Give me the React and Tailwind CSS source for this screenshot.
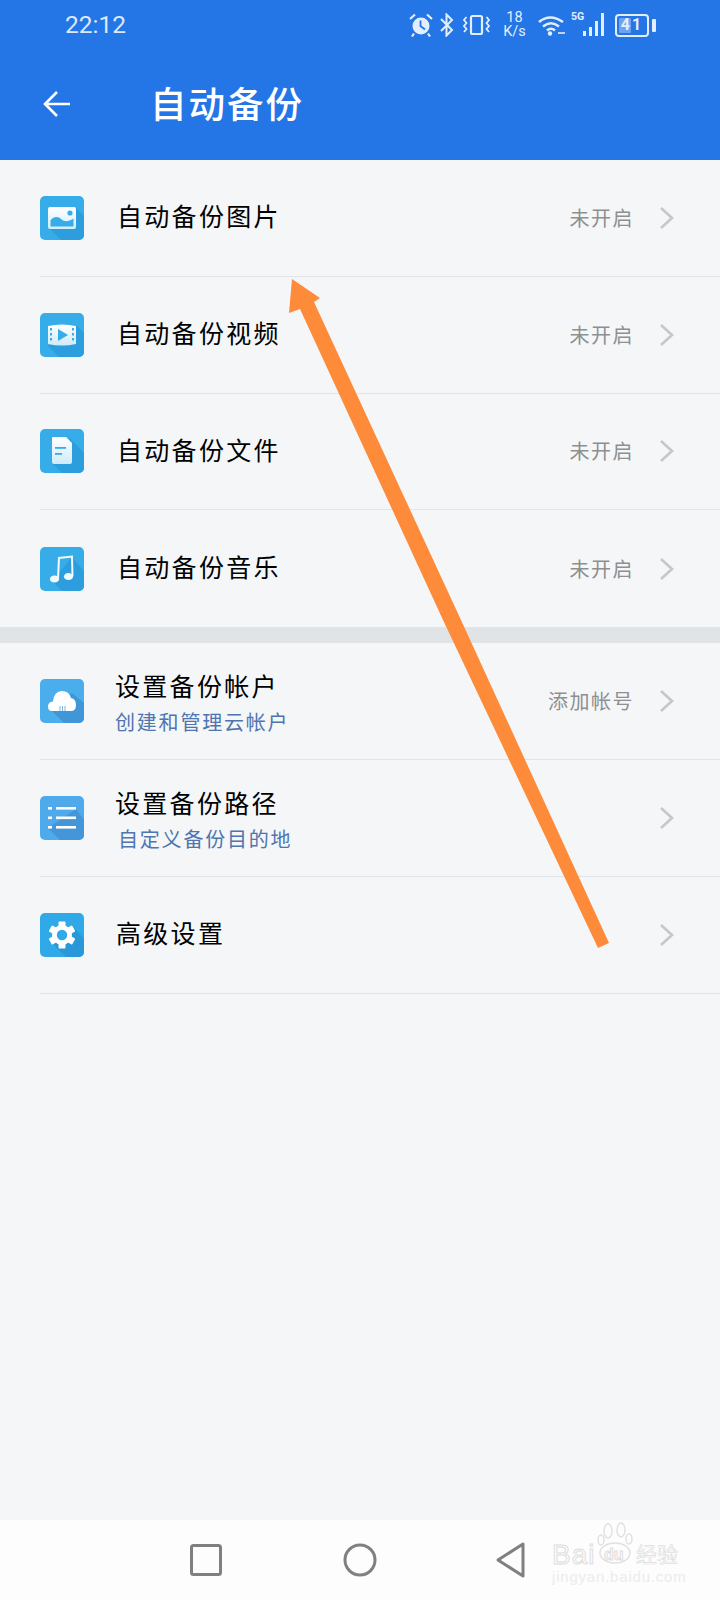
const cjk = "font-['Noto_Sans_CJK_SC','Noto_Sans',sans-serif]";

function Tile({ id, bg = '#36ade9', shade = '#2d9edd', shadow, children }) {
    return (
        <svg width="44" height="44" viewBox="0 0 44 44" className="shrink-0">
            <clipPath id={id}>
                <rect width="44" height="44" rx="5" />
            </clipPath>
            <g clipPath={`url(#${id})`}>
                <rect width="44" height="44" fill={bg} />
                <path d={shadow} fill={shade} />
            </g>
            {children}
        </svg>
    );
}

function PictureIcon() {
    return (
        <Tile id="tile-pic" shadow="M8 31 L21 44 L44 44 L44 20 L36 12 Z">
            <defs>
                <linearGradient id="picFill" x1="0" y1="0" x2="0" y2="1">
                    <stop offset="0" stopColor="#ffffff" />
                    <stop offset="1" stopColor="#d3edfb" />
                </linearGradient>
            </defs>
            <rect x="8" y="11" width="28" height="22" rx="2" fill="url(#picFill)" />
            <circle cx="30" cy="17" r="2.6" fill="#36ade9" />
            <path d="M10.5 30.5 V24.5 C14 20 18 20.5 21 23 C24.5 26 28 26 33.5 22.5 V30.5 Z" fill="#36ade9" />
        </Tile>
    );
}

function VideoIcon() {
    return (
        <Tile id="tile-vid" shadow="M8 33 L19 44 L44 44 L44 20 L36 12 Z">
            <defs>
                <linearGradient id="vidFill" x1="0" y1="0" x2="0" y2="1">
                    <stop offset="0" stopColor="#ffffff" />
                    <stop offset="1" stopColor="#cfeafa" />
                </linearGradient>
            </defs>
            <path d="M8 13 Q22 10 36 13 V31 Q22 34 8 31 Z" fill="url(#vidFill)" />
            <path d="M18 16 L28 22 L18 28 Z" fill="#36ade9" />
            <g fill="#36ade9">
                <rect x="10" y="15" width="2" height="2.5" />
                <rect x="10" y="20" width="2" height="2.5" />
                <rect x="10" y="25" width="2" height="2.5" />
                <rect x="32" y="15" width="2" height="2.5" />
                <rect x="32" y="20" width="2" height="2.5" />
                <rect x="32" y="25" width="2" height="2.5" />
            </g>
        </Tile>
    );
}

function FileIcon() {
    return (
        <Tile id="tile-file" shadow="M12 34 L22 44 L44 44 L44 24 L30 9 Z">
            <defs>
                <linearGradient id="fileFill" x1="0" y1="0" x2="0" y2="1">
                    <stop offset="0" stopColor="#ffffff" />
                    <stop offset="1" stopColor="#cfeafa" />
                </linearGradient>
            </defs>
            <path d="M13 8 H26 L32 14 V33 Q32 35 30 35 H14 Q12 35 12 33 V9 Q12 8 13 8 Z" fill="url(#fileFill)" />
            <rect x="15" y="18" width="11" height="1.8" fill="#36ade9" />
            <rect x="15" y="24" width="7" height="1.8" fill="#36ade9" />
        </Tile>
    );
}

function MusicIcon() {
    return (
        <Tile id="tile-music" shadow="M12 34 L22 44 L44 44 L44 24 L32 10 Z">
            <g fill="#f0f9fe">
                <ellipse cx="14.5" cy="32" rx="4.6" ry="3.6" />
                <ellipse cx="28.5" cy="29.5" rx="4.6" ry="3.6" />
            </g>
            <path d="M18 32 L19 11 L32 9.5 L32.5 29" fill="none" stroke="#f0f9fe" strokeWidth="2" />
        </Tile>
    );
}

function CloudIcon() {
    return (
        <Tile id="tile-cloud" bg="#4baeec" shade="#3f97d8" shadow="M10 30 L24 44 L44 44 L44 24 L32 14 Z">
            <path d="M12 32 Q8 32 8 27.5 Q8 23 13 22.5 Q14 12 22 12 Q29 12 31 19 Q36 20 36 26 Q36 32 31 32 Z" fill="#ffffff" />
            <g fill="#7cb3dc">
                <rect x="19.5" y="27" width="1" height="5" />
                <rect x="22" y="27" width="1" height="5" />
                <rect x="24.5" y="27" width="1" height="5" />
            </g>
        </Tile>
    );
}

function ListIcon() {
    return (
        <Tile id="tile-list" bg="#4faaeb" shade="#4496d8" shadow="M36 13 L44 24 L44 44 L20 44 L8 32 Z">
            <g fill="#ffffff">
                <rect x="8" y="11" width="4" height="2.6" />
                <rect x="16" y="11" width="20" height="2.6" />
                <rect x="8" y="20.5" width="4" height="2.6" />
                <rect x="16" y="20.5" width="20" height="2.6" />
                <rect x="8" y="30" width="4" height="2.6" />
                <rect x="16" y="30" width="20" height="2.6" />
            </g>
        </Tile>
    );
}

function GearIcon() {
    return (
        <Tile id="tile-gear" bg="#2fa9e7" shade="#2898d8" shadow="M14 32 L26 44 L44 44 L44 26 L32 12 Z">
            <g transform="translate(22 22)" fill="#ffffff">
                <circle r="10" />
                {[0, 60, 120, 180, 240, 300].map(a => (
                    <rect key={a} x="-3.5" y="-13.5" width="7" height="6" rx="1" transform={`rotate(${a})`} />
                ))}
            </g>
            <circle cx="22" cy="22" r="5.2" fill="#2fa9e7" />
        </Tile>
    );
}

function Chevron() {
    return (
        <svg width="15" height="24" viewBox="0 0 15 24" fill="none" stroke="#c5c7ca" strokeWidth="2.6" className="shrink-0 ml-[25px] mr-[46px]">
            <path d="M2 2 L13 12 L2 22" />
        </svg>
    );
}

function Row({ icon, title, sub, status, last, titleClass = 'ml-[33px]', subClass = '' }) {
    return (
        <div className="h-[116.8px] pl-10 shrink-0">
            <div className={`h-full flex items-center ${last ? '' : 'border-b border-[#e2e4e7]'}`}>
                {icon}
                <div className={`flex-1 ${titleClass} ${sub ? 'mt-[2px]' : '-mt-[5px]'}`}>
                    <div className={`text-[25px] leading-[32px] tracking-[2.3px] text-black ${cjk}`}>{title}</div>
                    {sub && <div className={`mt-[8px] text-[20px] leading-[26px] tracking-[1.8px] text-[#4f74b0] ${cjk} ${subClass}`}>{sub}</div>}
                </div>
                {status && <span className={`text-[20px] tracking-[1.5px] text-[#8d8f91] ${cjk}`}>{status}</span>}
                <Chevron />
            </div>
        </div>
    );
}

function StatusIcons() {
    return (
        <div className="flex items-center text-[#e3eefc]">
            {/* alarm */}
            <svg width="24" height="24" viewBox="0 0 24 24" fill="none" className="shrink-0">
                <circle cx="12" cy="13" r="8.5" fill="currentColor" />
                <path d="M11.5 7.5 V13 L16 16.5" stroke="#2475e6" strokeWidth="1.8" />
                <path d="M1 6 L6 1.5 M23 6 L18 1.5 M5 20.5 L3 23.5 M19 20.5 L21 23.5" stroke="currentColor" strokeWidth="2.2" />
            </svg>
            {/* bluetooth */}
            <svg width="14" height="24" viewBox="0 0 14 24" fill="none" stroke="currentColor" strokeWidth="2" className="shrink-0 ml-[7px]">
                <path d="M1 6 L12 17 L6.5 22.5 V1.5 L12 7 L1 18" />
            </svg>
            {/* vibrate */}
            <svg width="27" height="22" viewBox="0 0 27 22" fill="none" stroke="currentColor" strokeWidth="1.8" className="shrink-0 ml-[9px]">
                <rect x="8" y="2" width="11" height="18" rx="1.5" strokeWidth="2.2" />
                <path d="M3.5 3 L1 6 L3.5 9 L1 12 L3.5 15 L1 18 M23.5 3 L26 6 L23.5 9 L26 12 L23.5 15 L26 18" />
            </svg>
            {/* speed */}
            <div className="w-[23px] ml-[13px] flex flex-col items-center font-['Roboto',sans-serif] text-[14.5px] leading-[14px]">
                <span>18</span>
                <span>K/s</span>
            </div>
            {/* wifi */}
            <svg width="28" height="22" viewBox="0 0 28 22" fill="none" stroke="currentColor" strokeWidth="2.6" className="shrink-0 ml-[12px]">
                <path d="M1 8 Q12 -1 25 8 M5 12.5 Q13 6 21 12.5" />
                <path d="M9 16.5 Q13 13 17 16.5" />
                <circle cx="12" cy="19.5" r="2.2" fill="currentColor" stroke="none" />
                <path d="M20 19 H27" strokeWidth="1.6" />
            </svg>
            {/* 5G + signal */}
            <div className="relative w-[35px] h-[24px] ml-[5px] shrink-0">
                <span className="absolute -top-[1px] left-0 font-['Roboto',sans-serif] font-bold text-[10.5px] leading-[10px]">5G</span>
                <svg width="24" height="24" viewBox="0 0 24 24" fill="currentColor" className="absolute right-0 top-0">
                    <rect x="1" y="18" width="3" height="5" />
                    <rect x="7" y="14" width="3" height="9" />
                    <rect x="13" y="8" width="3" height="15" />
                    <rect x="19" y="0" width="3" height="23" />
                </svg>
            </div>
            {/* battery */}
            <div className="relative ml-[9px] w-[34px] h-[23px] shrink-0 rounded-[4px] border-2 border-current flex items-center justify-center">
                <div className="absolute left-[2px] top-[2px] bottom-[2px] w-[12px] bg-[#6da3ef] rounded-[1px]" />
                <span className="relative font-['Roboto',sans-serif] font-bold tracking-[2px] text-[16px] leading-none">41</span>
            </div>
            <div className="ml-[3px] w-[4px] h-[13px] rounded-[1px] bg-current shrink-0" />
        </div>
    );
}

export default function App() {
    return (
        <div className={`relative w-[720px] h-[1600px] overflow-hidden flex flex-col bg-[#f4f6f8] ${cjk}`}>
            <header className="h-[160px] shrink-0 bg-[#2475e6]">
                <div className="h-[50px] pl-[65px] pr-[64px] flex items-center justify-between">
                    <span className="font-['Roboto',sans-serif] text-[24.5px] text-[#dbe9fb]">22:12</span>
                    <StatusIcons />
                </div>
                <div className="h-[110px] pl-[43px] flex items-center">
                    <svg width="28" height="28" viewBox="0 0 28 28" fill="none" stroke="#ffffff" strokeWidth="2.6" className="-mt-[2px]">
                        <path d="M27 14 H2 M14 2 L2 14 L14 26" />
                    </svg>
                    <h1 className={`ml-[79px] -mt-[4px] text-[36.5px] tracking-[2px] font-medium text-white ${cjk}`}>自动备份</h1>
                </div>
            </header>

            <main className="flex-1">
                <Row icon={<PictureIcon />} title="自动备份图片" status="未开启" />
                <Row icon={<VideoIcon />} title="自动备份视频" status="未开启" />
                <Row icon={<FileIcon />} title="自动备份文件" status="未开启" />
                <Row icon={<MusicIcon />} title="自动备份音乐" status="未开启" last />
                <div className="h-4 bg-[#e1e4e6]" />
                <Row icon={<CloudIcon />} title="设置备份帐户" sub="创建和管理云帐户" status="添加帐号" titleClass="ml-[31px]" />
                <Row icon={<ListIcon />} title="设置备份路径" sub="自定义备份目的地" titleClass="ml-[31px]" subClass="ml-[3px]" />
                <Row icon={<GearIcon />} title="高级设置" titleClass="ml-[32px]" />
            </main>

            <nav className="relative h-20 shrink-0 bg-[#fdfdfd] flex items-center pl-[190px]">
                <svg width="32" height="32" viewBox="0 0 32 32" fill="none" stroke="#808080" strokeWidth="3" className="shrink-0">
                    <rect x="1.5" y="1.5" width="29" height="29" rx="2" />
                </svg>
                <svg width="34" height="34" viewBox="0 0 34 34" fill="none" stroke="#808080" strokeWidth="3" className="ml-[121px] shrink-0">
                    <circle cx="17" cy="17" r="15" />
                </svg>
                <svg width="30" height="36" viewBox="0 0 30 36" fill="none" stroke="#808080" strokeWidth="3" strokeLinejoin="round" className="ml-[119px] shrink-0">
                    <path d="M2 18 L27 2 V34 Z" />
                </svg>

                {/* baidu watermark */}
                <div className="absolute left-[552px] top-[2px] w-[128px] h-[72px] text-[#e4e4e4] font-['Liberation_Sans',sans-serif]">
                    <span className="absolute left-0 top-[18px] text-[28px] leading-[30px] tracking-[1px] text-transparent [-webkit-text-stroke:1px_#dedede]">Bai</span>
                    <svg width="38" height="42" viewBox="0 0 38 42" fill="none" stroke="#e0e0e0" strokeWidth="1.4" className="absolute left-[44px] top-0">
                        <ellipse cx="12" cy="9" rx="4" ry="7" />
                        <ellipse cx="25" cy="8" rx="4" ry="7" />
                        <ellipse cx="5" cy="18" rx="3" ry="5" />
                        <ellipse cx="33" cy="17" rx="3" ry="5" />
                        <ellipse cx="19" cy="31" rx="15" ry="10" />
                    </svg>
                    <span className="absolute left-[52px] top-[24px] text-[16px] leading-[18px] font-bold text-transparent [-webkit-text-stroke:1px_#dedede]">du</span>
                    <span className={`absolute left-[84px] top-[17px] text-[21px] leading-[28px] text-transparent [-webkit-text-stroke:0.7px_#dedede] ${cjk}`}>经验</span>
                    <span className="absolute left-0 top-[46px] text-[15px] leading-[18px] tracking-[0.8px] text-[#ececec]">jingyan.baidu.com</span>
                </div>
            </nav>

            {/* annotation arrow drawn over the screenshot */}
            <svg width="720" height="1600" viewBox="0 0 720 1600" className="absolute inset-0 pointer-events-none">
                <polygon points="292,279 320,298 314,302 461,620 609,943 598,948 443,620 300,309 289,313" fill="#fe8b3a" />
            </svg>
        </div>
    );
}
